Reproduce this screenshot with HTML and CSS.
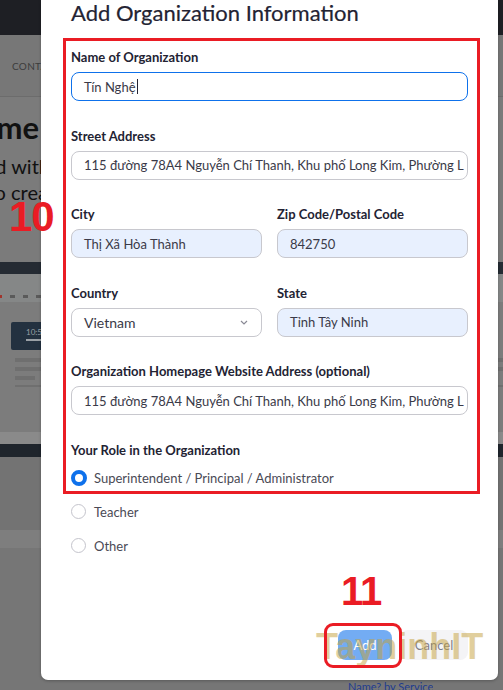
FILE: index.html
```html
<!DOCTYPE html>
<html lang="vi">
<head>
<meta charset="utf-8">
<title>Add Organization Information</title>
<link rel="stylesheet" href="styles.css">
</head>
<body>
<div class="page">
  <div class="bg-top"></div>
  <div class="bg-nav"><span class="bg-nav-text">CONTACT</span></div>
  <div class="bg-hero">
    <div class="bg-line big"><span>Welcome</span></div>
    <div class="bg-line mid w50"><span>Trusted with</span></div>
    <div class="bg-line mid w48"><span>Want to crea</span></div>
  </div>
  <div class="bg-dark"></div>
  <div class="bg-light">
    <div class="bg-icons"><i></i><i></i><i></i><i></i></div>
  </div>
  <div class="bg-card">
    <div class="bg-shot"><span>10:5</span><b></b></div>
    <div class="bg-bar b1"></div>
    <div class="bg-bar b2"></div>
    <div class="bg-bar b3"></div>
    <div class="bg-bar b4"></div>
  </div>
  <div class="bg-band-light"></div>
  <div class="bg-band-dark"></div>
  <div class="bg-rest"></div>
  <div class="bg-band-soft"></div>
  <div class="bg-bottom"><span class="bg-link">Name? by Service</span></div>
</div>

<div class="modal">
  <h1 class="modal-title">Add Organization Information</h1>

  <div class="field">
    <label class="label">Name of Organization</label>
    <div class="input focus">Tín Nghệ<span class="caret"></span></div>
  </div>

  <div class="field">
    <label class="label">Street Address</label>
    <div class="input">115 đường 78A4 Nguyễn Chí Thanh, Khu phố Long Kim, Phường L</div>
  </div>

  <div class="field-row">
    <div class="field">
      <label class="label">City</label>
      <div class="input auto">Thị Xã Hòa Thành</div>
    </div>
    <div class="field">
      <label class="label">Zip Code/Postal Code</label>
      <div class="input auto">842750</div>
    </div>
  </div>

  <div class="field-row">
    <div class="field">
      <label class="label">Country</label>
      <div class="input select">Vietnam
        <svg class="chev" width="8" height="5" viewBox="0 0 8 5"><path d="M1 1l3 3 3-3" fill="none" stroke="#8a8a95" stroke-width="1.2"/></svg>
      </div>
    </div>
    <div class="field">
      <label class="label">State</label>
      <div class="input auto">Tỉnh Tây Ninh</div>
    </div>
  </div>

  <div class="field">
    <label class="label">Organization Homepage Website Address (optional)</label>
    <div class="input">115 đường 78A4 Nguyễn Chí Thanh, Khu phố Long Kim, Phường L</div>
  </div>

  <div class="roles">
    <label class="label">Your Role in the Organization</label>
    <div class="radio-row"><span class="radio on"></span><span class="radio-text">Superintendent / Principal / Administrator</span></div>
    <div class="radio-row"><span class="radio"></span><span class="radio-text">Teacher</span></div>
    <div class="radio-row"><span class="radio"></span><span class="radio-text">Other</span></div>
  </div>

  <div class="actions">
    <button class="btn primary">Add</button>
    <button class="btn secondary">Cancel</button>
  </div>

  <div class="mark-box"></div>
  <div class="watermark">TayninhIT</div>
  <div class="mark-btn"></div>
  <div class="mark-num n11">11</div>
</div>

<div class="mark-num n10">10</div>
</body>
</html>
```

FILE: styles.css
```css
html, body {
  margin: 0;
  padding: 0;
}
body {
  width: 503px;
  height: 690px;
  overflow: hidden;
  position: relative;
  background: #7a7a7a;
  font-family: Lato, "Noto Sans", sans-serif;
}

/* ---------- dimmed backdrop ---------- */
.page {
  display: flex;
  flex-direction: column;
}
.bg-top { height: 35px; background: #1e1f24; }
.bg-nav {
  height: 62px;
  background: #777;
  border-bottom: 1px solid #6c6c6c;
  display: flex;
  align-items: center;
  padding-left: 12px;
  padding-top: 1px;
  box-sizing: border-box;
}
.bg-nav-text { font-size: 10px; color: #3c3c3c; letter-spacing: 0.3px; }
.bg-hero {
  height: 165px;
  background: #7b7b7b;
  padding-top: 10px;
  box-sizing: border-box;
}
.bg-line {
  display: flex;
  justify-content: flex-end;
  overflow: hidden;
  white-space: nowrap;
  color: #111;
}
.bg-line.big { width: 39px; font-size: 31px; font-weight: 700; height: 40px; line-height: 40px; }
.bg-line.mid { font-size: 20px; height: 26px; line-height: 26px; margin-top: 0; }
.bg-line.w50 { width: 50px; margin-top: 6px; }
.bg-line.w48 { width: 48px; }
.bg-dark { height: 12px; background: #252b33; }
.bg-light {
  height: 28px;
  background: #858787;
  display: flex;
  align-items: flex-end;
}
.bg-icons { display: flex; gap: 8px; padding: 0 0 4px 0; }
.bg-icons i { width: 5px; height: 3px; background: #5a5a5a; display: block; }
.bg-icons i:first-child { background: #a0342c; width: 2px; }
.bg-card {
  height: 130px;
  background: #7c7c7c;
  padding: 20px 0 0 11px;
  box-sizing: border-box;
}
.bg-shot {
  width: 40px;
  height: 28px;
  background: #233140;
  display: flex;
  flex-direction: column;
  align-items: flex-start;
  padding: 6px 0 0 15px;
  box-sizing: border-box;
  border-radius: 2px;
}
.bg-shot span { font-size: 8px; color: #9aa0a6; line-height: 9px; }
.bg-shot b { width: 20px; height: 2px; background: #9aa0a6; margin-top: 2px; }
.bg-bar { background: #6f6f6f; height: 4px; margin-top: 5px; margin-left: 4px; }
.bg-bar.b1 { margin-top: 8px; }
.bg-bar.b3 { width: 20px; }
.bg-bar.b4 { height: 2px; margin-top: 5px; }
.bg-band-light { height: 12px; background: #8a8a8a; }
.bg-band-dark { height: 13px; background: #1f252c; }
.bg-rest { height: 73px; background: #737373; }
.bg-band-soft { height: 18px; background: #7e7e7e; }
.bg-bottom {
  height: 142px;
  background: #767676;
  display: flex;
  align-items: flex-end;
  padding-left: 348px;
  box-sizing: border-box;
}
.bg-link { color: #1f3c8f; font-size: 11px; line-height: 10px; height: 8px; overflow: hidden; }

/* ---------- modal ---------- */
.modal {
  position: absolute;
  left: 41px;
  top: 0;
  width: 457px;
  height: 680px;
  background: #fff;
  border-radius: 0 0 7px 7px;
  box-shadow: 0 1px 3px rgba(0, 0, 0, 0.25);
  padding: 0 30px;
  box-sizing: border-box;
  color: #232333;
}
.modal-title {
  margin: 0 0 22px 0;
  font-size: 22px;
  line-height: 26px;
  font-weight: 400;
  color: #232333;
  white-space: nowrap;
  -webkit-text-stroke: 0.2px #232333;
}
.field {
  display: flex;
  flex-direction: column;
  margin-bottom: 25.6px;
  min-width: 0;
}
.field-row {
  display: grid;
  grid-template-columns: 1fr 1fr;
  column-gap: 15px;
}
.label {
  display: block;
  font-size: 13px;
  line-height: 18px;
  font-weight: 700;
  color: #232333;
  margin-bottom: 6px;
  white-space: nowrap;
}
.input {
  height: 29px;
  box-sizing: border-box;
  border: 1px solid #c8c8ce;
  border-radius: 8px;
  padding: 0 12px;
  display: flex;
  align-items: center;
  font-size: 13px;
  color: #3a3a48;
  white-space: nowrap;
  overflow: hidden;
  background: #fff;
}
.input.focus { border-color: #0e71eb; }
.input.auto { background: #e8f0fe; }
.input.select { justify-content: space-between; padding-right: 13px; font-size: 14px; }
.caret { width: 1px; height: 15px; background: #232333; margin-left: 1px; }
.chev { display: block; }

.roles { display: flex; flex-direction: column; }
.roles .label { margin-bottom: 8px; }
.radio-row {
  display: flex;
  align-items: center;
  height: 22px;
  margin-bottom: 12px;
}
.radio {
  width: 15px;
  height: 15px;
  box-sizing: border-box;
  border: 1px solid #c4c4cc;
  border-radius: 50%;
  margin-left: 0;
  margin-right: 8px;
  flex: none;
}
.radio.on { width: 16px; height: 16px; border: 4px solid #0e71eb; margin-right: 7px; }
.radio-text { font-size: 13px; color: #4a4a55; }

.actions {
  display: flex;
  justify-content: flex-end;
  gap: 8px;
  margin-top: 61px;
}
.btn {
  height: 30px;
  border: none;
  border-radius: 8px;
  font-family: Lato, "Noto Sans", sans-serif;
  font-size: 13px;
  padding: 0;
}
.btn.primary { width: 54px; background: #0e71eb; color: #fff; }
.btn.secondary { width: 68px; background: #ececef; color: #232333; }

/* ---------- annotations overlaying the screenshot ---------- */
.modal::after {
  content: "";
  position: absolute;
  left: 22px;
  top: 38px;
  width: 417px;
  height: 456px;
  box-sizing: border-box;
  border: 3px solid #ea1c24;
  pointer-events: none;
}
.mark-box {
  position: absolute;
  left: 272px;
  top: 630px;
  width: 174px;
  height: 36px;
  background: rgba(255, 255, 255, 0.42);
}
.watermark {
  position: absolute;
  left: 275px;
  top: 626px;
  font-family: "Liberation Sans", Arial, sans-serif;
  font-weight: 700;
  font-size: 36px;
  line-height: 42px;
  color: rgba(196, 160, 60, 0.5);
  white-space: nowrap;
}
.mark-btn {
  position: absolute;
  left: 283px;
  top: 623px;
  width: 78px;
  height: 45px;
  box-sizing: border-box;
  border: 3px solid #ea1c24;
  border-radius: 9px;
}
.mark-num {
  position: absolute;
  font-family: "Liberation Sans", Arial, sans-serif;
  font-weight: 700;
  color: #ea1c24;
  line-height: 1;
  letter-spacing: -1px;
}
.n10 { left: 9px; top: 196px; font-size: 42px; }
.n11 { left: 300px; top: 571px; font-size: 40px; }
```
